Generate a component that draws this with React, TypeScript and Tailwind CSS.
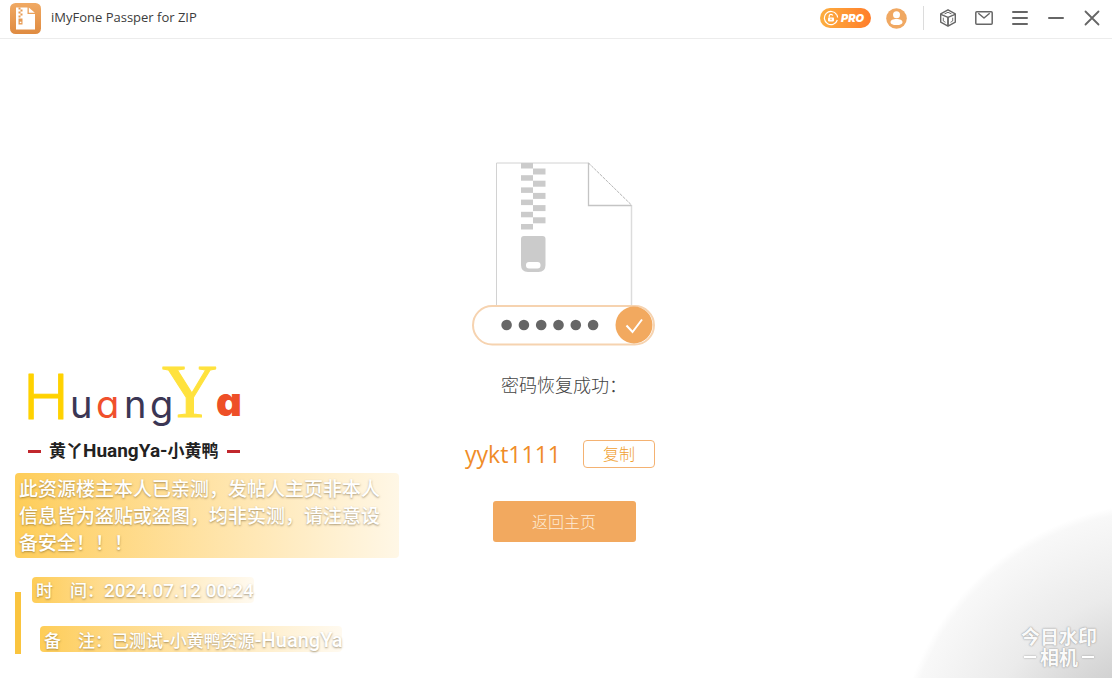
import React, { useState } from 'react';

const PASSWORD = 'yykt1111';
const TEETH = [0, 1, 2, 3, 4, 5];
const DOTS = [0, 1, 2, 3, 4, 5];

const AppLogo: React.FC = () => (
  <svg viewBox="0 0 31 31" className="w-[31px] h-[31px]" aria-hidden="true">
    <defs>
      <linearGradient id="logoBg" x1="0" y1="0" x2="0" y2="1">
        <stop offset="0" stopColor="#f0a963" />
        <stop offset="1" stopColor="#df8b41" />
      </linearGradient>
    </defs>
    <rect width="31" height="31" rx="5.5" fill="url(#logoBg)" />
    <path d="M6 4.5h11.5v6.5h7.5v15.5H6z" fill="#fff" />
    <path d="M18.8 4.5l6 5.2h-6z" fill="#fff" />
    <path d="M8.5 4.5h2v2h-2zM10.5 6.5h2v2h-2zM8.5 8.5h2v2h-2zM10.5 10.5h2v2h-2zM8.5 12.5h2v2h-2z" fill="#e79a52" />
    <path d="M8.5 15.5h4v6h-4z" fill="#e79a52" />
    <path d="M9.8 18.7h1.6v1.4H9.8z" fill="#fff" />
  </svg>
);

const ProIcon: React.FC = () => (
  <svg viewBox="0 0 16 16" className="w-4 h-4" fill="none" stroke="#fff" strokeWidth="1.2" aria-hidden="true">
    <path d="M13.600 4.600A6.600 6.600 0 1 0 14.300 10" />
    <path d="M14.600 7.500a6.600 6.600 0 0 0-1-3" />
    <rect x="5" y="7.400" width="6" height="4" rx="0.800" fill="#fff" stroke="none" />
    <path d="M6.200 7.600V6a1.800 1.800 0 0 1 3.500-.5" />
    <path d="M8 8.600v1.500" stroke="#fb9a35" strokeWidth="1" />
  </svg>
);

const UserIcon: React.FC = () => (
  <svg viewBox="0 0 21 21" className="w-[21px] h-[21px]" aria-hidden="true">
    <circle cx="10.5" cy="10.5" r="10.3" fill="#f0a862" />
    <circle cx="10.5" cy="6.7" r="3.500" fill="#fff" />
    <path d="M4.500 14.200c0-2 2.600-3.200 6-3.200s6 1.200 6 3.200c0 1.700-2.700 2.900-6 2.900s-6-1.200-6-2.900z" fill="#fff" />
  </svg>
);

const CubeIcon: React.FC = () => (
  <svg viewBox="0 0 18 18" className="w-[18px] h-[18px]" fill="none" stroke="#666" strokeWidth="1.400" strokeLinejoin="round" aria-hidden="true">
    <path d="M9 .8l7.300 4v8.400L9 17.200l-7.300-4V4.800z" />
    <path d="M1.900 5.400L9 8.300l7.100-2.900" />
    <path d="M9 8.300v8.700" strokeWidth="1.800" />
    <path d="M5.500 4.900L9 3.300l3.500 1.600" strokeWidth="1" />
    <path d="M4.300 8.700v3.300l2.200 1.300M13.700 8.700v3.300l-2.200 1.300" strokeWidth="0.900" />
  </svg>
);

const MailIcon: React.FC = () => (
  <svg viewBox="0 0 18 14" className="w-[18px] h-[14px]" fill="none" stroke="#666" strokeWidth="1.500" strokeLinejoin="round" aria-hidden="true">
    <rect x="0.800" y="0.800" width="16.400" height="12.400" rx="1" />
    <path d="M3.300 2.200L9 7l5.700-4.800" />
  </svg>
);

const MenuIcon: React.FC = () => (
  <svg viewBox="0 0 16 16" className="w-4 h-4" stroke="#666" strokeWidth="2" strokeLinecap="round" aria-hidden="true">
    <path d="M1 2h14M1 8h14M1 14h14" />
  </svg>
);

const MinimizeIcon: React.FC = () => (
  <svg viewBox="0 0 16 16" className="w-4 h-4" stroke="#666" strokeWidth="2" strokeLinecap="round" aria-hidden="true">
    <path d="M1 8h14" />
  </svg>
);

const CloseIcon: React.FC = () => (
  <svg viewBox="0 0 16 16" className="w-4 h-4" stroke="#666" strokeWidth="1.800" strokeLinecap="round" aria-hidden="true">
    <path d="M1.500 1.500l13 13M14.500 1.500l-13 13" />
  </svg>
);

const WINDOW_BUTTONS = [
  { label: 'Products', icon: <CubeIcon /> },
  { label: 'Feedback', icon: <MailIcon /> },
  { label: 'Menu', icon: <MenuIcon /> },
  { label: 'Minimize', icon: <MinimizeIcon /> },
  { label: 'Close', icon: <CloseIcon /> },
];

const TitleBar: React.FC = () => (
  <header className="h-[39px] flex items-center justify-between border-b border-[#ececec] pl-[10px] pr-[2px] pb-[2px]">
    <div className="flex items-center gap-[10px]">
      <AppLogo />
      <h1 className="text-[13px] text-[#3c3c3c]">iMyFone Passper for ZIP</h1>
    </div>
    <div className="flex items-center">
      <button
        type="button"
        className="h-5 w-[51px] flex items-center gap-[2px] pl-[3px] rounded-full bg-linear-to-r from-[#fcae3f] to-[#ff7d2b] text-white text-[11px] font-black italic font-[Inter,sans-serif]"
      >
        <ProIcon />
        PRO
      </button>
      <button type="button" aria-label="Account" className="ml-[15px]">
        <UserIcon />
      </button>
      <div className="w-px h-6 bg-[#dcdcdc] ml-4 mr-[6px]" />
      {WINDOW_BUTTONS.map((b) => (
        <button key={b.label} type="button" aria-label={b.label} className="w-9 h-8 flex items-center justify-center">
          {b.icon}
        </button>
      ))}
    </div>
  </header>
);

// zip file above a filled-in password field
const ZipIllustration: React.FC = () => (
  <svg viewBox="0 0 184 184" className="w-[184px] h-[184px]" fill="none" aria-hidden="true">
    <path d="M24.500 144V1h92" stroke="#d2d2d2" />
    <path d="M159.500 43v101" stroke="#dcdcdc" strokeWidth="1.500" />
    <path d="M116.500 1v42.500h43" stroke="#c4c4c4" strokeWidth="1.300" />
    <path d="M116.500 1l43 42" stroke="#b4b4b4" strokeDasharray="3 1" />
    {TEETH.map((i) => (
      <g key={i} fill="#cbcbcb">
        <rect x="49" y={1 + i * 12.2} width="12" height="5.500" />
        {i < 5 && <rect x="61" y={6.5 + i * 12.2} width="12.500" height="6" />}
      </g>
    ))}
    <path d="M52 74h18.500a3 3 0 0 1 3 3v26q0 7-7 7H56q-7 0-7-7V77a3 3 0 0 1 3-3z" fill="#cbcbcb" />
    <rect x="54" y="100" width="14.500" height="6.500" rx="3" fill="#fff" />
    <rect x="1" y="144" width="181" height="38.500" rx="19.200" fill="#fff" stroke="#f6d3b0" strokeWidth="2" />
    {DOTS.map((i) => (
      <circle key={i} cx={34.6 + i * 17.3} cy="163" r="5.300" fill="#666" />
    ))}
    <circle cx="162" cy="163" r="18.500" fill="#f2a95f" />
    <path d="M154.500 163.500l6 6.500 9.500-12.500" stroke="#fff" strokeWidth="2" />
  </svg>
);

const BrandLogo: React.FC = () => (
  <svg viewBox="0 -20 230 98" className="w-[230px] h-[98px] [font-feature-settings:'cv11']" role="img" aria-label="HuangYa">
    <g strokeLinejoin="round" fontFamily="Inter, sans-serif">
      <text x="8" y="56" fontSize="62" fontWeight="300" fill="#ffd200" stroke="#ffd200" strokeWidth="1">H</text>
      <g fontSize="38" fontWeight="400">
        <text x="55" y="55" fill="#3b3654">u</text>
        <text x="81" y="55" fill="#f0502c">a</text>
        <text x="109" y="55" fill="#3b3654">n</text>
        <text x="135" y="55" fill="#3b3654">g</text>
      </g>
      <text x="147" y="54" fontSize="77" fontFamily="Liberation Serif, serif" fill="#ffe23d" stroke="#ffe23d" strokeWidth="1">Y</text>
      <text x="201" y="53" fontSize="40" fontWeight="900" fill="#ee4f27">a</text>
    </g>
  </svg>
);

const Watermark: React.FC = () => (
  <aside className="absolute left-[15px] bottom-[26px] w-96 max-w-full font-[Roboto,'Noto_Sans_CJK_SC',sans-serif]">
    <BrandLogo />
    <div className="flex items-center gap-2 pl-[13px] -mt-[2px] h-6 text-[17px] font-bold text-[#222]">
      <span className="w-[13px] h-[3px] bg-[#c1272d]" />
      <p>
        黄丫<span className="text-[19px]">HuangYa-</span>小黄鸭
      </p>
      <span className="w-[13px] h-[3px] bg-[#c1272d]" />
    </div>
    <p className="mt-[10px] px-1 pt-[3px] pb-px rounded bg-linear-to-r from-[#fecd57] to-[#fff7e6] text-white text-[19px] leading-[27px] font-medium [text-shadow:0_1px_2px_rgba(90,70,30,0.5)]">
      此资源楼主本人已亲测，发帖人主页非本人信息皆为盗贴或盗图，均非实测，请注意设备安全！！！
    </p>
    <div className="relative mt-[19px] flex flex-col items-start gap-[23px] text-white text-[17px] leading-7 font-medium [text-shadow:0_1px_2px_rgba(90,70,30,0.5)]">
      <span className="absolute left-0 top-[15px] -bottom-[2px] w-[6px] bg-[#fac43e]" />
      <p className="ml-[17px] h-[26px] pl-1 rounded bg-linear-to-r from-[#fecd57] to-[#fffaf0] whitespace-nowrap">
        时　间：<span className="text-[19px]">2024.07.12 00:24</span>
      </p>
      <p className="ml-[25px] h-[26px] pl-1 rounded bg-linear-to-r from-[#fecd57] to-[#fffaf0] whitespace-nowrap">
        备　注：已测试<span className="text-xl leading-7">-</span>小黄鸭资源
        <span className="text-xl leading-7">-HuangYa</span>
      </p>
    </div>
  </aside>
);

const CameraStamp: React.FC = () => (
  <div className="absolute right-0 bottom-0 w-[200px] h-[170px] flex flex-col items-end justify-end pr-[15px] pb-[11px] bg-[radial-gradient(circle_267px_at_251px_262px,#bfbfbf_0%,#d2d2d2_40%,#ebebeb_68%,#f8f8f8_97%,#ffffff_100%)] text-[#fafafa] text-[19px] leading-[21px] font-bold font-['Noto_Sans_CJK_SC',sans-serif] [text-shadow:0_0_2px_#999,0_0_1px_#aaa]">
    <p>今日水印</p>
    <p className="w-[76px] flex items-center justify-center gap-1">
      <span className="w-3 h-[2px] bg-white shadow-[0_0_2px_#999]" />
      相机
      <span className="w-3 h-[2px] bg-white shadow-[0_0_2px_#999]" />
    </p>
  </div>
);

const App: React.FC = () => {
  const [copied, setCopied] = useState<boolean>(false);

  const handleCopy = () => {
    navigator.clipboard?.writeText(PASSWORD);
    setCopied(true);
  };

  return (
    <div className="relative min-h-screen flex flex-col overflow-hidden bg-white font-['Open_Sans','Noto_Sans_CJK_SC',sans-serif]">
      <TitleBar />
      <main className="flex-1 flex flex-col items-center pt-[123px] pl-4 pb-[136px]">
        <ZipIllustration />
        <p className="mt-[25px] text-lg leading-7 font-light text-[#444]">密码恢复成功：</p>
        <div className="mt-[41px] mr-2 flex items-center gap-[22px]">
          <output className="text-[23px] leading-7 text-[#f08c28]">{PASSWORD}</output>
          <button
            type="button"
            onClick={handleCopy}
            aria-pressed={copied}
            className="w-[72px] h-7 rounded border border-[#f4b272] text-base leading-6 font-light text-[#f0a030]"
          >
            复制
          </button>
        </div>
        <button type="button" className="mt-[33px] w-[143px] h-[41px] rounded-[3px] bg-[#f2a95f] text-base font-light text-[#fdebd6]">
          返回主页
        </button>
      </main>
      <CameraStamp />
      <Watermark />
    </div>
  );
};

export default App;
